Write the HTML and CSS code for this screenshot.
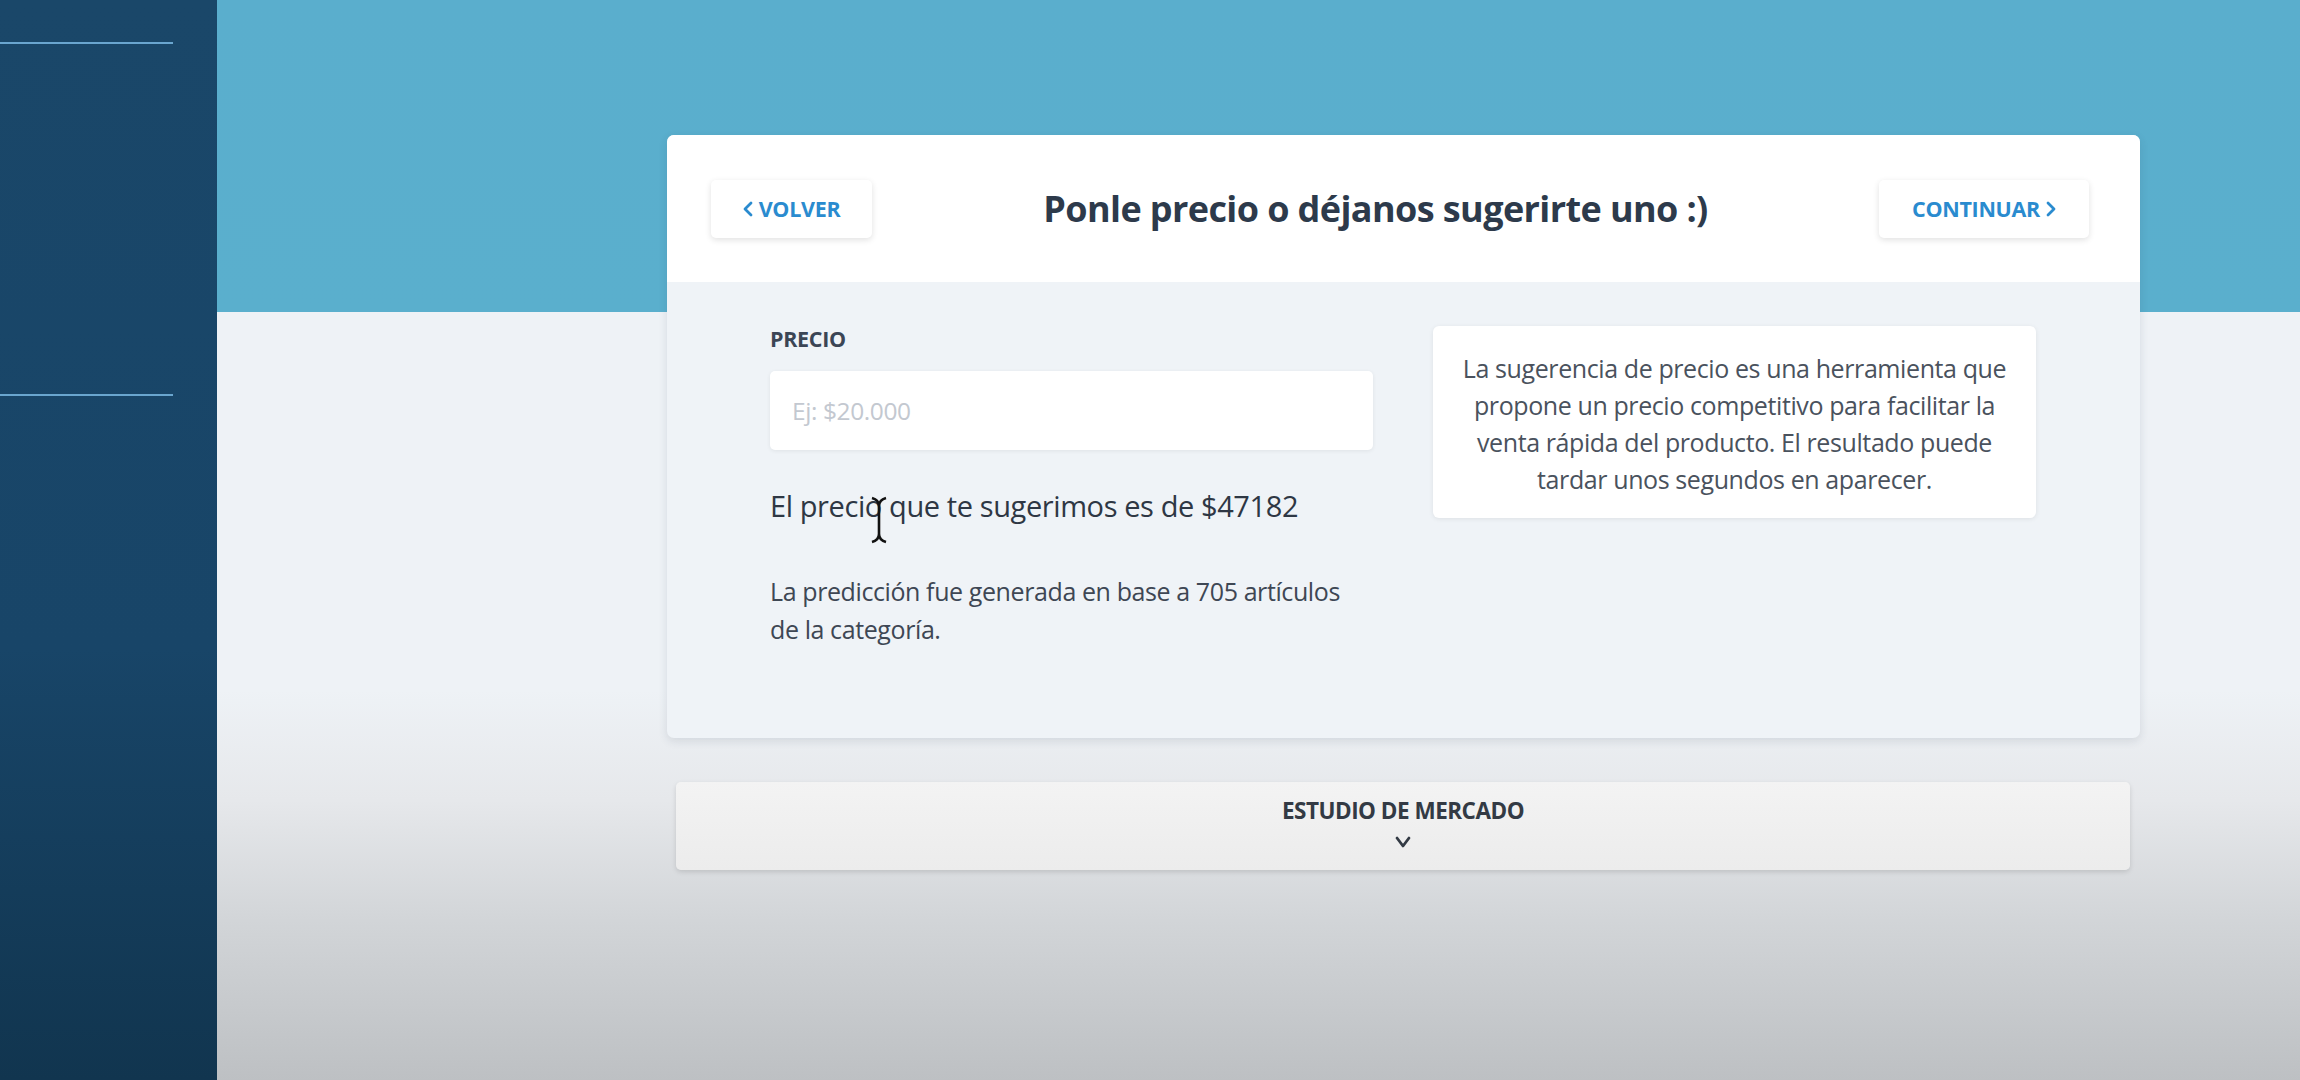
FILE: index.html
```html
<!DOCTYPE html>
<html lang="es">
<head>
<meta charset="utf-8">
<title>Precio</title>
<link rel="stylesheet" href="styles.css">
</head>
<body>
<aside class="sidebar">
  <div class="side-line side-line-top"></div>
  <div class="side-line side-line-mid"></div>
</aside>
<main class="main">
  <section class="card">
    <header class="card-head">
      <button class="nav-btn nav-back">
        <svg class="chev" viewBox="0 0 10 16" width="10" height="16"><polyline points="8,2 2,8 8,14" fill="none" stroke="currentColor" stroke-width="2.8" stroke-linecap="round" stroke-linejoin="round"/></svg>
        <span>VOLVER</span>
      </button>
      <h1 class="title">Ponle precio o déjanos sugerirte uno :)</h1>
      <button class="nav-btn nav-next">
        <span>CONTINUAR</span>
        <svg class="chev" viewBox="0 0 10 16" width="10" height="16"><polyline points="2,2 8,8 2,14" fill="none" stroke="currentColor" stroke-width="2.8" stroke-linecap="round" stroke-linejoin="round"/></svg>
      </button>
    </header>
    <div class="card-body">
      <div class="price-col">
        <label class="field-label" for="precio">PRECIO</label>
        <input id="precio" class="price-input" type="text" placeholder="Ej: $20.000">
        <p class="suggest">El precio que te sugerimos es de $47182</p>
        <p class="note">La predicción fue generada en base a 705 artículos de la categoría.</p>
        <svg class="cursor" viewBox="0 0 18 48" width="18" height="48"><path d="M2 2 Q9 4 9 10 Q9 4 16 2 M9 10 V38 M2 46 Q9 44 9 38 Q9 44 16 46" fill="none" stroke="#111" stroke-width="2.6"/></svg>
      </div>
      <div class="info-box">
        La sugerencia de precio es una herramienta que propone un precio competitivo para facilitar la venta rápida del producto. El resultado puede tardar unos segundos en aparecer.
      </div>
    </div>
  </section>
  <section class="market">
    <div class="market-title">ESTUDIO DE MERCADO</div>
    <svg class="market-chev" viewBox="0 0 16 12" width="16" height="12"><polyline points="2,2 8,10 14,2" fill="none" stroke="#333a44" stroke-width="2.8" stroke-linecap="round" stroke-linejoin="round"/></svg>
  </section>
</main>
</body>
</html>
```

FILE: styles.css
```css
* { box-sizing: border-box; }
html, body { margin: 0; padding: 0; }
body {
  width: 2300px;
  height: 1080px;
  display: flex;
  overflow: hidden;
  font-family: "Open Sans", "Noto Sans", sans-serif;
}
.sidebar {
  width: 217px;
  flex: none;
  height: 1080px;
  background: linear-gradient(to bottom, #1a4769 0%, #184568 60%, #11354f 100%);
  padding-top: 42px;
}
.side-line {
  width: 173px;
  height: 2px;
  background: #6aa6cf;
}
.side-line-mid { margin-top: 350px; }
.main {
  flex: 1;
  height: 1080px;
  background: linear-gradient(to bottom, #5aaecd 0, #5aafcd 312px, #eef2f6 312px, #eef2f6 690px, #e6e8eb 800px, #d2d5d8 920px, #bdc0c3 1080px);
  padding-top: 135px;
  padding-left: 450px;
}
.card {
  width: 1473px;
  border-radius: 7px;
  background: #eff3f7;
  box-shadow: 0 3px 10px rgba(30, 50, 70, 0.12);
  overflow: hidden;
}
.card-head {
  height: 147px;
  background: #ffffff;
  display: flex;
  align-items: center;
  padding: 0 51px 0 44px;
}
.nav-btn {
  height: 58px;
  border: none;
  border-radius: 5px;
  background: #ffffff;
  box-shadow: 0 2px 6px rgba(0, 0, 0, 0.12);
  color: #2a8bcf;
  font-family: "Open Sans", sans-serif;
  font-weight: 700;
  font-size: 21.5px;
  letter-spacing: -0.3px;
  display: flex;
  align-items: center;
  justify-content: center;
  gap: 6px;
  padding: 0;
  flex: none;
}
.nav-back { width: 161px; }
.nav-next { width: 210px; }
.chev { display: block; }
.title {
  flex: 1;
  margin: 0;
  text-align: center;
  font-size: 36px;
  font-weight: 700;
  letter-spacing: -0.6px;
  color: #2d3a4b;
}
.card-body {
  height: 456px;
  display: grid;
  grid-template-columns: 603px 603px;
  column-gap: 60px;
  padding: 44px 103px 0 103px;
}
.price-col {
  position: relative;
  display: flex;
  flex-direction: column;
}
.field-label {
  font-size: 21.5px;
  font-weight: 700;
  color: #3b4555;
  line-height: 24px;
  margin-top: 1px;
  letter-spacing: -0.3px;
}
.price-input {
  margin-top: 20px;
  height: 79px;
  border: none;
  border-radius: 5px;
  background: #ffffff;
  box-shadow: 0 1px 4px rgba(0, 0, 0, 0.07);
  padding: 0 22px;
  font-family: "Open Sans", sans-serif;
  font-size: 24.5px;
  letter-spacing: -0.4px;
  color: #333;
  outline: none;
}
.price-input::placeholder { color: #c3c8d0; }
.suggest {
  margin: 40px 0 0 0;
  font-size: 29px;
  line-height: 32px;
  color: #2e3744;
  letter-spacing: -0.4px;
}
.note {
  margin: 50px 0 0 0;
  font-size: 25px;
  line-height: 38px;
  color: #3e4754;
  letter-spacing: -0.4px;
  width: 603px;
}
.cursor {
  position: absolute;
  left: 100px;
  top: 170px;
}
.info-box {
  align-self: start;
  height: 192px;
  background: #ffffff;
  border-radius: 6px;
  box-shadow: 0 1px 5px rgba(0, 0, 0, 0.08);
  padding: 24px 20px 0 20px;
  text-align: center;
  font-size: 25px;
  line-height: 37px;
  color: #4a525d;
  letter-spacing: -0.4px;
}
.market {
  margin-top: 44px;
  margin-left: 9px;
  width: 1454px;
  height: 88px;
  background: linear-gradient(to bottom, #f3f3f3, #ececec);
  border-radius: 5px;
  box-shadow: 0 2px 5px rgba(0, 0, 0, 0.13);
  display: flex;
  flex-direction: column;
  align-items: center;
  padding-top: 16px;
}
.market-title {
  font-size: 22.5px;
  font-weight: 700;
  color: #333a44;
  letter-spacing: -0.5px;
  line-height: 26px;
}
.market-chev { margin-top: 12px; display: block; }
```
